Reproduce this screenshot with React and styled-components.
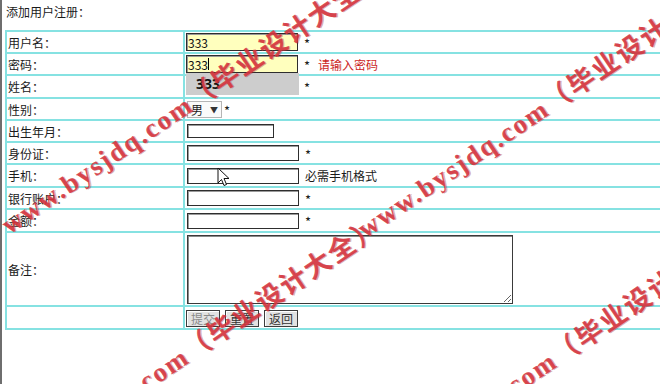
import React from 'react'
import styled, { createGlobalStyle } from 'styled-components'

const GlobalStyle = createGlobalStyle`
	body {
		margin: 0;
		background: #fff;
		font-family: 'Noto Sans CJK SC', 'Noto Sans', sans-serif;
		font-size: 12px;
		color: #1a1a1a;
	}
`

const Page = styled.div`
	position: relative;
	height: 384px;
	overflow: hidden;
	border-left: 2px solid #6e6e6e;
`
const Title = styled.div`
	height: 30px;
	line-height: 24px;
	padding-left: 4px;
`
const FormTable = styled.table`
	margin-left: 3px;
	width: 720px;
	border-collapse: separate;
	border-spacing: 0;
	border: 1px solid #86e2e2;
`
const Label = styled.td`
	width: 174px;
	height: ${(p) => p.$h || 20}px;
	padding: 0 1px 0 1px;
	border: 1px solid #86e2e2;
	vertical-align: middle;
	white-space: nowrap;
`
const Field = styled.td`
	height: ${(p) => p.$h || 20}px;
	padding: 0 0 0 1px;
	border: 1px solid #86e2e2;
	vertical-align: middle;
	white-space: nowrap;
`
const Row = styled.div`
	display: flex;
	align-items: center;
`
const InputWrap = styled.span`
	position: relative;
	display: inline-flex;
`
const TextInput = styled.input`
	box-sizing: border-box;
	width: ${(p) => p.$w || 112}px;
	height: ${(p) => p.$ht || 17}px;
	margin: 0 0 0 ${(p) => p.$ml || 0}px;
	padding: 0 1px;
	border: 1px solid #2e2e2e;
	box-shadow: inset 1px 1px 0 #9a9a9a;
	background: ${(p) => (p.$filled ? '#ffffbe' : '#fff')};
	font-family: 'Noto Sans CJK SC', sans-serif;
	font-size: 12px;
	color: #111;
	outline: none;
`
const Caret = styled.span`
	position: absolute;
	left: 22px;
	top: 3px;
	width: 1px;
	height: 12px;
	background: #000;
`
const Suggest = styled.div`
	position: absolute;
	left: 0;
	top: 18px;
	width: 113px;
	height: 22px;
	background: #cdcdcd;
	font-family: 'Open Sans', 'Liberation Sans', sans-serif;
	font-weight: 700;
	font-size: 14px;
	line-height: 22px;
	padding-left: 10px;
	box-sizing: border-box;
	color: #111;
	z-index: 2;
`
const Star = styled.span`
	margin-left: ${(p) => p.$ml ?? 6}px;
	font-size: 13px;
	line-height: 12px;
	padding-top: 3px;
`
const Hint = styled.span`
	margin-left: ${(p) => p.$ml ?? 8}px;
	color: ${(p) => (p.$error ? '#cc1f1f' : '#1a1a1a')};
`
const SelectBox = styled.span`
	box-sizing: border-box;
	display: inline-flex;
	align-items: center;
	justify-content: space-between;
	width: 35px;
	height: 17px;
	margin-left: 1px;
	padding: 0 3px;
	border: 1px solid #b5b5b5;
	background: #fafafa;
	font-size: 12px;
`
const Arrow = styled.span`
	font-size: 8px;
	color: #333;
`
const Memo = styled.textarea`
	box-sizing: border-box;
	display: block;
	width: 326px;
	height: 69px;
	margin: 1px 0 0 1px;
	border: 1px solid #3a3a3a;
	box-shadow: inset 1px 1px 0 #8a8a8a;
	resize: both;
	font-family: 'Noto Sans CJK SC', sans-serif;
`
const Buttons = styled.div`
	display: flex;
	gap: 5px;
	padding-top: 1px;
`
const Button = styled.button`
	box-sizing: border-box;
	width: 34px;
	height: 17px;
	margin: 0;
	padding: 0;
	border: 1px solid #3c3c3c;
	box-shadow: inset 1px 1px 0 #fff;
	background: #e2e2e2;
	font-family: 'Noto Sans CJK SC', sans-serif;
	font-size: 12px;
	line-height: 15px;
	color: ${(p) => (p.$muted ? '#8a8a8a' : '#333')};
`
const Watermark = styled.span`
	position: absolute;
	left: ${(p) => p.$x}px;
	top: ${(p) => p.$y}px;
	transform-origin: 0 100%;
	transform: rotate(-34deg);
	white-space: nowrap;
	font-family: 'Liberation Serif', 'Noto Sans CJK SC', serif;
	font-weight: 700;
	font-size: 27px;
	line-height: 27px;
	letter-spacing: 2px;
	color: rgba(214, 52, 62, 0.88);
	text-shadow: 1px 1px 0 rgba(140, 30, 30, 0.35);
	pointer-events: none;
	z-index: 5;
`
const Pointer = styled.svg`
	position: absolute;
	left: 31px;
	top: -1px;
	z-index: 3;
`

const starred = [
	{ label: '身份证：' },
	{ label: '手机：', h: 21, hint: '必需手机格式' },
	{ label: '银行账户：' },
	{ label: '金额：', h: 21 },
]

const mark = 'www.bysjdq.com（毕业设计大全）'

const App = () => {
	return (
		<Page>
			<GlobalStyle />
			<Title>添加用户注册：</Title>
			<FormTable>
				<tbody>
					<tr>
						<Label>用户名：</Label>
						<Field>
							<Row>
								<TextInput $filled $ht={18} defaultValue="333" />
								<Star>*</Star>
							</Row>
						</Field>
					</tr>
					<tr>
						<Label>密码：</Label>
						<Field>
							<Row>
								<InputWrap>
									<TextInput $filled $ht={18} defaultValue="333" />
									<Caret />
									<Suggest>333</Suggest>
								</InputWrap>
								<Star>*</Star>
								<Hint $error>请输入密码</Hint>
							</Row>
						</Field>
					</tr>
					<tr>
						<Label $h={21}>姓名：</Label>
						<Field $h={21}>
							<Row>
								<TextInput />
								<Star>*</Star>
							</Row>
						</Field>
					</tr>
					<tr>
						<Label>性别：</Label>
						<Field>
							<Row>
								<SelectBox>
									男<Arrow>▼</Arrow>
								</SelectBox>
								<Star $ml={2}>*</Star>
							</Row>
						</Field>
					</tr>
					<tr>
						<Label>出生年月：</Label>
						<Field>
							<Row>
								<TextInput $w={87} $ht={14} $ml={1} />
							</Row>
						</Field>
					</tr>
					{starred.map((f) => (
						<tr key={f.label}>
							<Label $h={f.h}>{f.label}</Label>
							<Field $h={f.h}>
								<Row>
									<InputWrap>
										<TextInput $ht={16} $ml={1} />
										{f.hint && (
											<Pointer width="13" height="20" viewBox="0 0 13 20">
												<path
													d="M1 1 L1 16 L4.5 12.5 L7 18.5 L9.5 17.5 L7 11.5 L12 11.5 Z"
													fill="#fff"
													stroke="#111"
													strokeWidth="1"
													strokeLinejoin="round"
												/>
											</Pointer>
										)}
									</InputWrap>
									{f.hint ? <Hint $ml={6}>{f.hint}</Hint> : <Star>*</Star>}
								</Row>
							</Field>
						</tr>
					))}
					<tr>
						<Label $h={72}>备注：</Label>
						<Field $h={72}>
							<Memo />
						</Field>
					</tr>
					<tr>
						<Label $h={21}></Label>
						<Field $h={21}>
							<Buttons>
								<Button $muted>提交</Button>
								<Button>重置</Button>
								<Button>返回</Button>
							</Buttons>
						</Field>
					</tr>
				</tbody>
			</FormTable>
			<Watermark $x={10} $y={212}>{mark}</Watermark>
			<Watermark $x={366} $y={216}>{mark}</Watermark>
			<Watermark $x={6} $y={464}>{mark}</Watermark>
			<Watermark $x={374} $y={468}>{mark}</Watermark>
		</Page>
	)
}

export default App
